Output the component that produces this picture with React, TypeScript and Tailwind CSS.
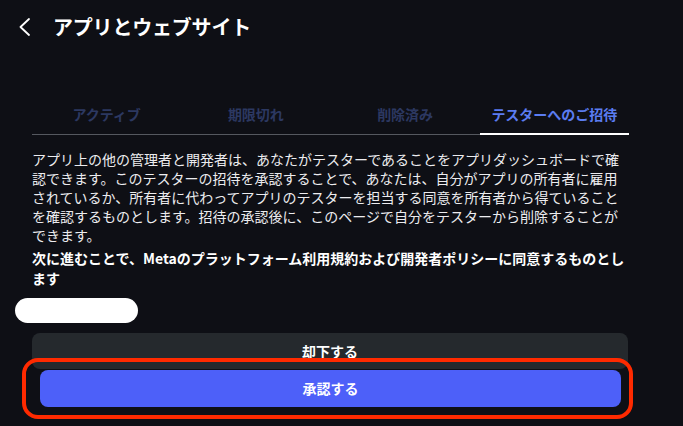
const tabs = [
  { label: "アクティブ", active: false },
  { label: "期限切れ", active: false },
  { label: "削除済み", active: false },
  { label: "テスターへのご招待", active: true },
];

export default function App() {
  return (
    <div
      className="relative h-[426px] w-full overflow-hidden bg-[#0e0f15] text-white"
      style={{ fontFamily: '"Noto Sans CJK JP", "Noto Sans", sans-serif' }}
    >
      {/* Header */}
      <header className="flex h-[54px] items-center pl-[18px]">
        <svg width="12" height="18" viewBox="0 0 12 18" fill="none">
          <polyline
            points="11,1 2.5,9 11,17"
            stroke="#ffffff"
            strokeWidth="1.8"
            strokeLinecap="round"
            strokeLinejoin="round"
          />
        </svg>
        <h1 className="ml-[23px] text-[20px] font-bold leading-none tracking-[-0.2px]">
          アプリとウェブサイト
        </h1>
      </header>

      {/* Tabs */}
      <nav className="ml-[32px] mt-[44px] flex w-[597px] border-b border-[#55585f]">
        {tabs.map((tab) => (
          <div
            key={tab.label}
            className={`relative flex h-[36px] flex-1 items-center justify-center pb-[4px] text-[14px] font-bold ${
              tab.active ? "text-[#5b7cf1]" : "text-[#2c3861]"
            }`}
          >
            {tab.label}
            {tab.active && (
              <span className="absolute -bottom-[1px] left-0 right-0 h-[2px] bg-white" />
            )}
          </div>
        ))}
      </nav>

      {/* Body */}
      <p className="ml-[32px] mt-[15px] w-[597px] text-[14px] leading-[19px] text-[#ececef]">
        アプリ上の他の管理者と開発者は、あなたがテスターであることをアプリダッシュボードで確認できます。このテスターの招待を承認することで、あなたは、自分がアプリの所有者に雇用されているか、所有者に代わってアプリのテスターを担当する同意を所有者から得ていることを確認するものとします。招待の承認後に、このページで自分をテスターから削除することができます。
      </p>
      <p className="ml-[32px] mt-[4px] w-[597px] text-[14px] font-bold leading-[19.5px]">
        次に進むことで、Metaのプラットフォーム利用規約および開発者ポリシーに同意するものとします
      </p>

      <div className="ml-[15px] mt-[10px] h-[25px] w-[123px] rounded-full bg-white" />

      {/* Actions */}
      <button className="ml-[32px] mt-[10px] flex h-[36px] w-[596px] items-center justify-center rounded-[8px] bg-[#25292d] text-[14px] font-bold">
        却下する
      </button>
      <button className="ml-[40px] mt-[1px] flex h-[37px] w-[581px] items-center justify-center rounded-[8px] bg-[#4d60f9] text-[14px] font-bold">
        承認する
      </button>

      {/* Highlight ring */}
      <div className="pointer-events-none absolute left-[22px] top-[358px] h-[61px] w-[611px] rounded-[16px] border-[4px] border-[#ff2a00]" />
    </div>
  );
}
